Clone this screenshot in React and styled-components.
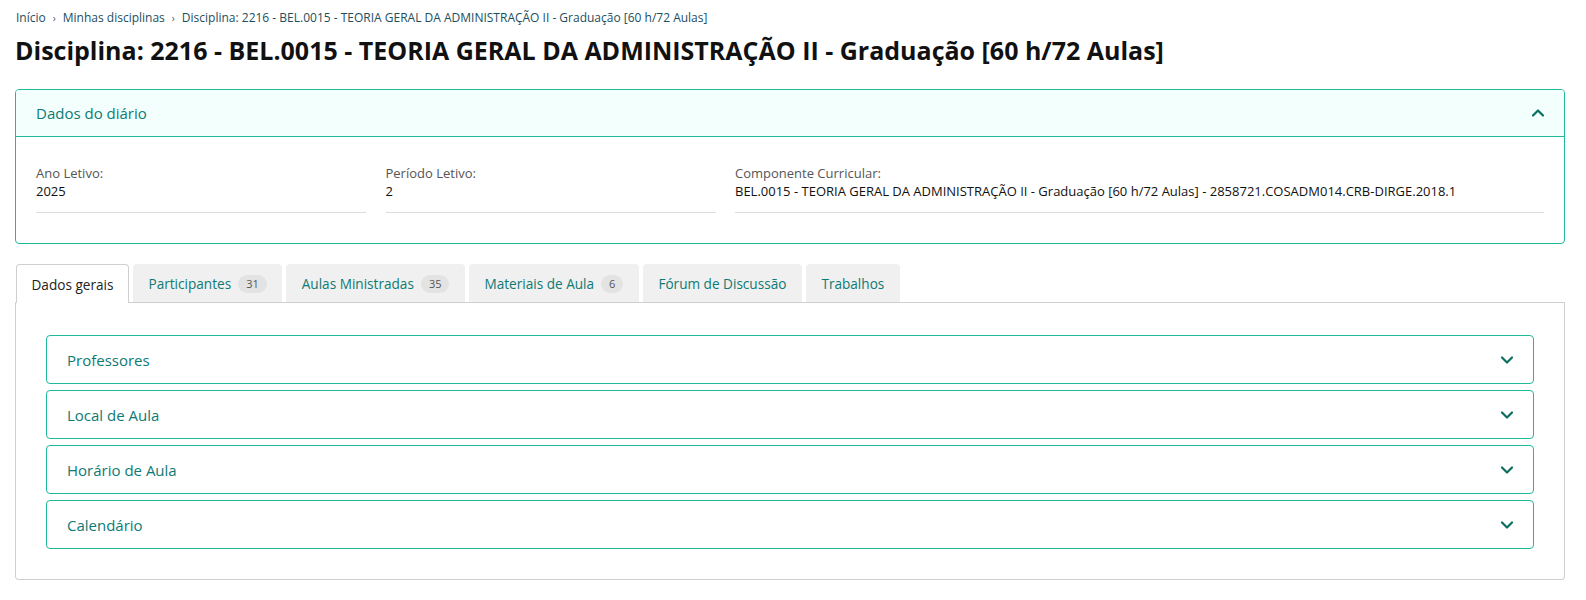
import React, { useState } from 'react';
import styled, { createGlobalStyle } from 'styled-components';

const GlobalStyle = createGlobalStyle`
  * { box-sizing: border-box; }
  html, body { overflow: hidden; }
  body {
    margin: 0;
    background: #ffffff;
    font-family: "Open Sans", "Noto Sans", sans-serif;
    color: #212529;
  }
`;

const Page = styled.div`
  padding: 9px 21px 10px 15px;
`;

const Breadcrumb = styled.nav`
  display: flex;
  align-items: center;
  font-size: 12px;
  line-height: 18px;
  padding-left: 1px;
`;

const Crumb = styled.span`
  color: #1d4e5e;
`;

const Sep = styled.span`
  margin: 0 7px;
  font-size: 10px;
  color: #555;
`;

const Title = styled.h1`
  margin: 5px 0 21px 0;
  font-size: 25px;
  font-weight: 700;
  line-height: 36px;
  color: #111;
`;

const Card = styled.section`
  border: 1px solid #1fb99b;
  border-radius: 4px;
  overflow: hidden;
`;

const CardHeader = styled.div`
  display: flex;
  align-items: center;
  justify-content: space-between;
  height: 47px;
  padding: 0 19px 0 20px;
  background: #f3fffd;
  border-bottom: 1px solid #1fb99b;
  color: #0e7a74;
  font-size: 15px;
`;

const CardBody = styled.div`
  display: grid;
  grid-template-columns: 330px 330px 1fr;
  column-gap: 19.5px;
  padding: 27px 20px 30px 20px;
`;

const Field = styled.div`
  border-bottom: 1px solid #dcdcdc;
  padding-bottom: 12px;
`;

const Label = styled.div`
  font-size: 13px;
  color: #555;
  line-height: 18px;
`;

const Value = styled.div`
  font-size: 13px;
  color: #111;
  line-height: 18px;
`;

const Tabs = styled.div`
  display: flex;
  gap: 4px;
  margin-top: 20px;
  padding-left: 1px;
  border-bottom: 1px solid #cfcfcf;
`;

const Tab = styled.button`
  display: flex;
  align-items: center;
  gap: 7px;
  padding: 0 14.5px;
  border: 1px solid ${p => (p.$active ? '#cfcfcf' : '#f0f0f0')};
  border-bottom: none;
  border-radius: 4px 4px 0 0;
  background: ${p => (p.$active ? '#ffffff' : '#f0f0f0')};
  color: ${p => (p.$active ? '#222' : '#0e7a74')};
  font-family: inherit;
  font-size: 13.6px;
  margin-bottom: ${p => (p.$active ? '-1px' : '0')};
  height: ${p => (p.$active ? '39px' : '38px')};
  cursor: pointer;
`;

const Badge = styled.span`
  display: inline-flex;
  align-items: center;
  justify-content: center;
  min-width: 22px;
  height: 18px;
  padding: 0 8px;
  border-radius: 9px;
  background: #e3e3e3;
  color: #555;
  font-size: 11px;
`;

const Panel = styled.div`
  border: 1px solid #cfcfcf;
  border-top: none;
  border-radius: 0 0 4px 4px;
  padding: 32px 30px 30px 30px;
  display: flex;
  flex-direction: column;
  gap: 6px;
`;

const Accordion = styled.div`
  display: flex;
  align-items: center;
  justify-content: space-between;
  height: 49px;
  padding: 0 19px 0 20px;
  border: 1px solid #1fb99b;
  border-radius: 4px;
  color: #0e7a74;
  font-size: 15px;
  cursor: pointer;
`;

const Chevron = ({ up }) => (
  <svg width="14" height="14" viewBox="0 0 14 14" fill="none">
    <path
      d={up ? 'M2 9.5 L7 4.5 L12 9.5' : 'M2 4.5 L7 9.5 L12 4.5'}
      stroke="#0b6e60"
      strokeWidth="2.2"
      strokeLinecap="round"
      strokeLinejoin="round"
    />
  </svg>
);

const tabs = [
  { label: 'Dados gerais' },
  { label: 'Participantes', count: 31 },
  { label: 'Aulas Ministradas', count: 35 },
  { label: 'Materiais de Aula', count: 6 },
  { label: 'Fórum de Discussão' },
  { label: 'Trabalhos' },
];

const sections = ['Professores', 'Local de Aula', 'Horário de Aula', 'Calendário'];

export default function App() {
  const [active, setActive] = useState(0);
  const name = '2216 - BEL.0015 - TEORIA GERAL DA ADMINISTRAÇÃO II - Graduação [60 h/72 Aulas]';

  return (
    <Page>
      <GlobalStyle />
      <Breadcrumb>
        <Crumb>Início</Crumb>
        <Sep>›</Sep>
        <Crumb>Minhas disciplinas</Crumb>
        <Sep>›</Sep>
        <Crumb>Disciplina: {name}</Crumb>
      </Breadcrumb>
      <Title>Disciplina: {name}</Title>

      <Card>
        <CardHeader>
          <span>Dados do diário</span>
          <Chevron up />
        </CardHeader>
        <CardBody>
          <Field>
            <Label>Ano Letivo:</Label>
            <Value>2025</Value>
          </Field>
          <Field>
            <Label>Período Letivo:</Label>
            <Value>2</Value>
          </Field>
          <Field>
            <Label>Componente Curricular:</Label>
            <Value>
              BEL.0015 - TEORIA GERAL DA ADMINISTRAÇÃO II - Graduação [60 h/72 Aulas] - 2858721.COSADM014.CRB-DIRGE.2018.1
            </Value>
          </Field>
        </CardBody>
      </Card>

      <Tabs>
        {tabs.map((t, i) => (
          <Tab key={t.label} $active={i === active} onClick={() => setActive(i)}>
            {t.label}
            {t.count != null && <Badge>{t.count}</Badge>}
          </Tab>
        ))}
      </Tabs>
      <Panel>
        {sections.map(s => (
          <Accordion key={s}>
            <span>{s}</span>
            <Chevron />
          </Accordion>
        ))}
      </Panel>
    </Page>
  );
}
